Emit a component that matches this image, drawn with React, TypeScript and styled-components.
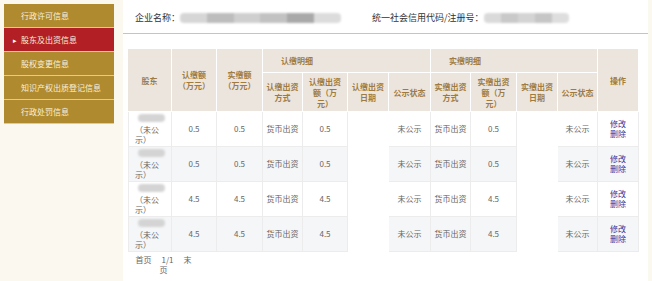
import styled, { createGlobalStyle } from 'styled-components'

const GlobalStyle = createGlobalStyle`
  html, body {
    margin: 0;
    padding: 0;
    background: #fbf8ef;
  }
  body {
    font-family: "Noto Sans CJK SC", "Noto Sans", sans-serif;
  }
`

const navItems = ['行政许可信息', '股东及出资信息', '股权变更信息', '知识产权出质登记信息', '行政处罚信息']

type Row = {
  subscribed: string
  paid: string
  subAmount: string
  paidAmount: string
}

const rows: Row[] = [
  { subscribed: '0.5', paid: '0.5', subAmount: '0.5', paidAmount: '0.5' },
  { subscribed: '0.5', paid: '0.5', subAmount: '0.5', paidAmount: '0.5' },
  { subscribed: '4.5', paid: '4.5', subAmount: '4.5', paidAmount: '4.5' },
  { subscribed: '4.5', paid: '4.5', subAmount: '4.5', paidAmount: '4.5' },
]

const columnWidths = [44, 45, 46, 40, 45, 41, 42, 40, 46, 41, 40, 41]

export default function App() {
  return (
    <>
      <GlobalStyle />
      <Layout>
        <Sidebar>
          {navItems.map((item, i) => (
            <NavItem key={item} $active={i === 1}>
              {item}
            </NavItem>
          ))}
        </Sidebar>
        <Main>
          <Header>
            <Label>企业名称：</Label>
            <Redacted $width={161} $shades={['#d6d6d6', '#bdbdbd', '#cfcfcf', '#c2c2c2', '#a9a9a9', '#dcdcdc']} />
            <Label $gap={31}>统一社会信用代码/注册号：</Label>
            <Redacted $width={85} $shades={['#dadada', '#c9c9c9', '#d4d4d4', '#c6c6c6', '#dedede']} />
          </Header>
          <TableWrap>
            <Table>
              <colgroup>
                {columnWidths.map((w, i) => (
                  <col key={i} style={{ width: w }} />
                ))}
              </colgroup>
              <thead>
                <HeadRow $height={24}>
                  <Th rowSpan={2}>股东</Th>
                  <Th rowSpan={2}>认缴额（万元）</Th>
                  <Th rowSpan={2}>实缴额（万元）</Th>
                  <GroupTh colSpan={4}>认缴明细</GroupTh>
                  <GroupTh colSpan={4}>实缴明细</GroupTh>
                  <Th rowSpan={2}>操作</Th>
                </HeadRow>
                <HeadRow $height={39}>
                  <Th>认缴出资方式</Th>
                  <Th $pad={5}>认缴出资额（万元）</Th>
                  <Th>认缴出资日期</Th>
                  <Th>公示状态</Th>
                  <Th>实缴出资方式</Th>
                  <Th $pad={5}>实缴出资额（万元）</Th>
                  <Th>实缴出资日期</Th>
                  <Th>公示状态</Th>
                </HeadRow>
              </thead>
              <tbody>
                {rows.map((row, i) => (
                  <BodyRow key={i} $striped={i % 2 === 1}>
                    <HolderCell>
                      <NameBlur />
                      （未公示）
                    </HolderCell>
                    <Td>{row.subscribed}</Td>
                    <Td>{row.paid}</Td>
                    <Td>货币出资</Td>
                    <Td>{row.subAmount}</Td>
                    <Td $empty />
                    <Td>未公示</Td>
                    <Td>货币出资</Td>
                    <Td>{row.paidAmount}</Td>
                    <Td $empty />
                    <Td>未公示</Td>
                    <Td>
                      <ActionLink href="#">修改</ActionLink>
                      <ActionLink href="#">删除</ActionLink>
                    </Td>
                  </BodyRow>
                ))}
              </tbody>
            </Table>
            <Pager>
              <PagerItem>首页</PagerItem>
              <PagerItem>1/1</PagerItem>
              <span>末</span>
              <span>页</span>
            </Pager>
          </TableWrap>
        </Main>
      </Layout>
    </>
  )
}

const Layout = styled.div`
  display: flex;
  align-items: flex-start;
  min-height: 281px;
`

const Sidebar = styled.nav`
  width: 110px;
  margin: 4px 9px 0 4px;
  display: flex;
  flex-direction: column;
`

const NavItem = styled.div<{ $active?: boolean }>`
  position: relative;
  height: 23px;
  padding-left: 17px;
  display: flex;
  align-items: center;
  background: ${({ $active }) => ($active ? '#b21f24' : '#b08a2f')};
  color: #f8f0dc;
  font-size: 8px;
  border-bottom: 1px solid #dccb9f;

  &::before {
    content: ${({ $active }) => ($active ? "'▸'" : 'none')};
    position: absolute;
    left: 9px;
    font-size: 7px;
    color: #fff;
  }
`

const Main = styled.main`
  flex: 1;
  min-height: 281px;
  margin-right: 4px;
  background: #fff;
`

const Header = styled.div`
  height: 31px;
  padding: 2px 0 0 12px;
  display: flex;
  align-items: center;
  border-bottom: 1px solid #c4c4c4;
  font-size: 9px;
  color: #333;
`

const Label = styled.span<{ $gap?: number }>`
  margin-left: ${({ $gap }) => $gap ?? 0}px;
  white-space: nowrap;
`

const Redacted = styled.span<{ $width: number; $shades: string[] }>`
  display: inline-block;
  width: ${({ $width }) => $width}px;
  height: 10px;
  border-radius: 4px;
  background: linear-gradient(
    90deg,
    ${({ $shades }) =>
      $shades
        .map((c, i) => `${c} ${(i / $shades.length) * 100}%, ${c} ${((i + 1) / $shades.length) * 100}%`)
        .join(', ')}
  );
  filter: blur(1px);
`

const TableWrap = styled.div`
  padding: 15px 9px 0 5px;
`

const Table = styled.table`
  width: 511px;
  table-layout: fixed;
  border-collapse: separate;
  border-spacing: 0;
  font-size: 8px;
`

const HeadRow = styled.tr<{ $height: number }>`
  height: ${({ $height }) => $height}px;
`

const Th = styled.th<{ $pad?: number }>`
  padding: 0 ${({ $pad }) => $pad ?? 3}px;
  background: #ece5de;
  color: #9f7b40;
  font-weight: bold;
  line-height: 11px;
  text-align: center;
  border-right: 1px solid #fff;
  border-bottom: 1px solid #fff;
`

const GroupTh = styled(Th)`
  text-align: left;
  padding-left: 18px;
`

const BodyRow = styled.tr<{ $striped: boolean }>`
  height: 35px;
  background: ${({ $striped }) => ($striped ? '#f5f6f8' : '#fff')};
`

const Td = styled.td<{ $empty?: boolean }>`
  padding: 0 3px;
  color: #666;
  line-height: 10px;
  text-align: center;
  border-right: 1px solid ${({ $empty }) => ($empty ? 'transparent' : '#ececec')};
  border-bottom: 1px solid ${({ $empty }) => ($empty ? 'transparent' : '#ececec')};
  background: ${({ $empty }) => ($empty ? '#fff' : 'transparent')};
`

const HolderCell = styled(Td)`
  text-align: left;
  padding-left: 6px;
  border-left: 1px solid #ececec;
`

const NameBlur = styled.span`
  display: block;
  width: 27px;
  height: 8px;
  margin: 0 0 3px 3px;
  border-radius: 4px;
  background: #d4d4d4;
  filter: blur(1px);
`

const ActionLink = styled.a`
  display: block;
  color: #34349a;
  text-decoration: none;
`

const Pager = styled.div`
  width: 63px;
  margin: 3px 0 0 4px;
  font-size: 8px;
  line-height: 10px;
  color: #666;
  text-align: center;
`

const PagerItem = styled.span`
  margin-right: 10px;
`
